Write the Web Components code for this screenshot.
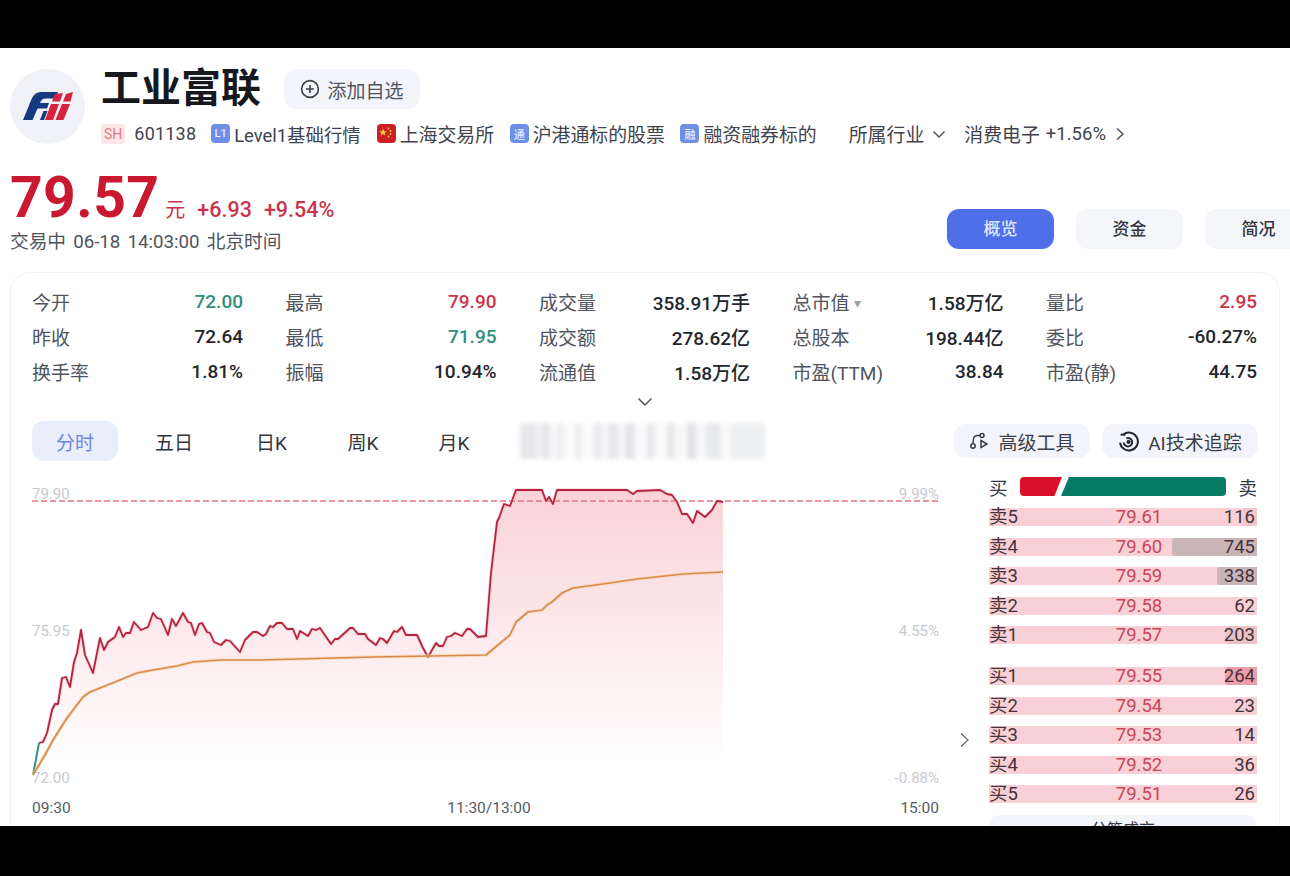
<!DOCTYPE html>
<html lang="zh-CN">
<head>
<meta charset="UTF-8">
<title>工业富联</title>
<style>
  html, body { margin: 0; background: #000; }
  body { font-family: Roboto, "Noto Sans CJK SC", sans-serif; overflow: hidden; height: 876px; }
  main-page { display: block; }
</style>
</head>
<body>
<main-page>
  <stock-title></stock-title>
  <stock-quote></stock-quote>
  <stats-card>
    <chart-tabs></chart-tabs>
    <div style="display:flex; align-items:flex-start">
      <time-chart></time-chart>
      <order-book></order-book>
    </div>
  </stats-card>
</main-page>

<script>
const FONT = 'Roboto, "Noto Sans CJK SC", sans-serif';

class MainPage extends HTMLElement {
  connectedCallback() {
    this.attachShadow({mode: 'open'}).innerHTML = `
    <style>
      :host { display: block; width: 1290px; height: 876px; background: #000; padding-top: 48px; box-sizing: border-box; }
      .sheet { height: 778px; background: #fff; overflow: hidden; padding: 21px 0 0 10px; box-sizing: border-box; font-family: ${FONT}; }
    </style>
    <div class="sheet"><slot></slot></div>`;
  }
}

class StockTag extends HTMLElement {
  connectedCallback() {
    const text = this.getAttribute('icon') || '';
    const flag = this.hasAttribute('flag');
    const inner = flag
      ? `<svg width="19" height="19" viewBox="0 0 19 19" fill="#f2cf3c"><path d="M6 4.500l1 2.700 2.800.1-2.200 1.700.8 2.700L6 10.100l-2.400 1.600.8-2.700-2.200-1.700 2.800-.1z"/><circle cx="11.500" cy="4.500" r=".9"/><circle cx="13.500" cy="7" r=".9"/><circle cx="13.500" cy="10" r=".9"/><circle cx="11.500" cy="12.500" r=".9"/></svg>`
      : text;
    const bg = flag ? '#cd1f28' : '#6f8fe6';
    this.attachShadow({mode: 'open'}).innerHTML = `
    <style>
      :host { display: inline-flex; align-items: center; gap: 4px; font-size: 18.900px; color: #3f434d; white-space: nowrap; }
      .ic { width: 19px; height: 19px; border-radius: 4px; background: ${bg}; color: #e6ecff; font-size: 11px; font-weight: 500; display: flex; align-items: center; justify-content: center; flex: none; }
    </style>
    <span class="ic">${inner}</span><slot></slot>`;
  }
}

class StockTitle extends HTMLElement {
  connectedCallback() {
    this.attachShadow({mode: 'open'}).innerHTML = `
    <style>
      :host { display: flex; gap: 16px; height: 75px; }
      .logo { width: 75px; height: 75px; border-radius: 50%; background: #eff1f6; flex: none; }
      .top { display: flex; align-items: center; height: 40px; gap: 23px; margin-bottom: 11px; }
      h1 { margin: 0; font-size: 40px; line-height: 40px; font-weight: 700; color: #16181d; letter-spacing: 0; }
      .add { height: 40px; width: 136px; box-sizing: border-box; background: #f4f5fa; border-radius: 12px; display: flex; align-items: center; justify-content: center; gap: 7px; font-size: 19px; color: #50545e; }
      .tags { display: flex; align-items: center; height: 27px; font-size: 18.900px; color: #3f434d; white-space: nowrap; }
      .sh { background: #fde6e6; color: #e57b80; font-size: 14px; height: 20px; line-height: 20px; padding: 0 3px; border-radius: 3px; margin-right: 9px; }
      .code { margin-right: 15px; font-size: 18px; letter-spacing: .2px; }
      stock-tag { margin-right: 15.500px; }
      .ind { display: inline-flex; align-items: center; }
      svg { flex: none; }
    </style>
    <div class="logo">
      <svg width="75" height="75" viewBox="0 0 75 75">
        <path fill="#16397f" d="M13 51 L22 29 Q25 23 31 23 L48 23 L45.500 29.500 L35 29.500 Q32 29.500 31 32 L30 34 L39 34 L37 39.500 L27.500 39.500 L22.500 51Z"/>
        <path fill="#16397f" d="M30 51 L33.500 42 L37.500 42 L34 51Z"/>
        <path fill="#d8213c" d="M35 51 L41 35 L49 35 L43 51Z"/>
        <path fill="#d8213c" d="M42 32.500 L45 25 L53 24 L50 32.500Z"/>
        <path fill="#d8213c" d="M45.500 51 L52 35 L60 35 L53.500 51Z"/>
        <path fill="#d8213c" d="M53 32.500 L56 25 L63 23 L60.500 32.500Z"/>
      </svg>
    </div>
    <div>
      <div class="top">
        <h1>工业富联</h1>
        <div class="add">
          <svg width="20" height="20" viewBox="0 0 20 20" fill="none" stroke="#3a3e48" stroke-width="1.6"><circle cx="10" cy="10" r="8.400"/><path d="M10 6v8M6 10h8"/></svg>
          <span>添加自选</span>
        </div>
      </div>
      <div class="tags">
        <span class="sh">SH</span><span class="code">601138</span>
        <stock-tag icon="L1" style="font-size:18.400px;margin-right:16px">Level1基础行情</stock-tag>
        <stock-tag flag>上海交易所</stock-tag>
        <stock-tag icon="通">沪港通标的股票</stock-tag>
        <stock-tag icon="融" style="margin-right:32px">融资融券标的</stock-tag>
        <span class="ind" style="margin-right:18px">所属行业
          <svg style="margin-left:8px" width="14" height="14" viewBox="0 0 14 14" fill="none" stroke="#4a4e58" stroke-width="1.400"><path d="M1.500 4.500 7 10l5.500-5.500"/></svg></span>
        <span class="ind">消费电子<span style="margin-left:6px;font-size:18.500px">+1.56%</span>
          <svg style="margin-left:7px" width="14" height="14" viewBox="0 0 14 14" fill="none" stroke="#4a4e58" stroke-width="1.400"><path d="M4 1.500 10 7l-6 5.500"/></svg></span>
      </div>
    </div>`;
  }
}

class StockQuote extends HTMLElement {
  connectedCallback() {
    this.attachShadow({mode: 'open'}).innerHTML = `
    <style>
      :host { display: flex; height: 128px; align-items: flex-start; }
      .left { flex: 0 0 937px; padding-top: 24px; box-sizing: border-box; }
      .price { display: flex; align-items: baseline; height: 60px; color: #c9182f; white-space: nowrap; }
      .big { font-size: 57px; line-height: 60px; font-weight: 700; letter-spacing: .4px; }
      .unit { font-size: 20px; margin-left: 6px; color: #c8354a; }
      .chg { font-size: 21.500px; margin-left: 12px; color: #c8354a; font-weight: 500; }
      .time { margin-top: -2px; font-size: 18.700px; color: #50545e; white-space: nowrap; word-spacing: 2.500px; }
      .btns { display: flex; gap: 22px; margin-top: 65px; flex: none; }
      .btn { width: 107px; height: 40px; padding-bottom: 3px; box-sizing: border-box; border-radius: 12px; background: #f5f6fa; display: flex; align-items: center; justify-content: center; font-size: 17px; font-weight: 500; color: #33363f; flex: none; }
      .on { background: #4f6fe8; color: #dfe6ff; }
    </style>
    <div class="left">
      <div class="price"><span class="big">79.57</span><span class="unit">元</span><span class="chg">+6.93</span><span class="chg">+9.54%</span></div>
      <div class="time">交易中 06-18 14:03:00 北京时间</div>
    </div>
    <div class="btns"><div class="btn on">概览</div><div class="btn">资金</div><div class="btn">简况</div></div>`;
  }
}

const STATS = [
  ['今开','72.00','#2f8f7a'],['最高','79.90','#c8354a'],['成交量','358.91万手'],['总市值 <i>▾</i>','1.58万亿'],['量比','2.95','#c8354a'],
  ['昨收','72.64'],['最低','71.95','#2f8f7a'],['成交额','278.62亿'],['总股本','198.44亿'],['委比','-60.27%'],
  ['换手率','1.81%'],['振幅','10.94%'],['流通值','1.58万亿'],['市盈(TTM)','38.84'],['市盈(静)','44.75']
];

class StatsCard extends HTMLElement {
  connectedCallback() {
    const cells = STATS.map(([k, v, c]) =>
      `<div class="cell"><span class="k">${k}</span><span class="v" style="color:${c || '#23262d'}">${v}</span></div>`).join('');
    this.attachShadow({mode: 'open'}).innerHTML = `
    <style>
      :host { display: block; width: 1270px; height: 600px; box-sizing: border-box; border: 1px solid #eff0f4; border-radius: 20px; padding: 11px 21px 0; }
      .grid { display: grid; grid-template-columns: repeat(5, 211px); column-gap: 42.500px; grid-auto-rows: 35px; }
      .cell { display: flex; justify-content: space-between; align-items: center; font-size: 19px; white-space: nowrap; }
      .k { color: #50545e; }
      .k i { font-style: normal; font-size: 14px; color: #9a9ea8; vertical-align: 2px; }
      .v { font-weight: 500; }
      .more { height: 32px; display: flex; justify-content: center; align-items: flex-start; padding-top: 8px; box-sizing: border-box; }
    </style>
    <div class="grid">${cells}</div>
    <div class="more"><svg width="16" height="10" viewBox="0 0 16 10" fill="none" stroke="#4a4e58" stroke-width="1.400"><path d="M1.500 1.500 8 8l6.500-6.500"/></svg></div>
    <slot></slot>`;
  }
}

class ChartTabs extends HTMLElement {
  connectedCallback() {
    this.attachShadow({mode: 'open'}).innerHTML = `
    <style>
      :host { display: flex; align-items: center; height: 40px; font-size: 19px; color: #33363f; white-space: nowrap; margin-bottom: 19px; }
      .t { text-align: center; flex: none; }
      .on { width: 86px; height: 40px; line-height: 45px; background: #e9eefb; color: #6f86dd; border-radius: 12px; }
      .blur { width: 245px; height: 36px; margin-left: 50px; flex: none; filter: blur(2px);
        background: linear-gradient(90deg, #e6e7ea 0 7%, #f4f4f6 7% 9%, #e4e5e8 9% 12%, #f7f7f8 12% 15%, #eeeff1 15% 18%, #fbfbfc 18% 23%, #eaebee 23% 25%, #fbfbfc 25% 30%, #e8e9ec 30% 33%, #f6f6f8 33% 36%, #e6e7ea 36% 40%, #f7f7f8 40% 43%, #e4e5e9 43% 47%, #f9f9fa 47% 52%, #e8e9ec 52% 55%, #fafafb 55% 60%, #e6e7ea 60% 63%, #f8f8f9 63% 68%, #e3e4e8 68% 72%, #f7f7f9 72% 76%, #e9eaed 76% 82%, #f9f9fa 82% 86%, #eeeff1 86% 100%); }
      .tool { height: 34px; border-radius: 12px; background: #f4f5fa; display: flex; align-items: center; justify-content: center; gap: 9px; font-size: 19px; color: #3a3e48; flex: none; }
      svg { flex: none; }
    </style>
    <div class="t on">分时</div>
    <div class="t" style="width:38px;margin-left:37px">五日</div>
    <div class="t" style="width:30px;margin-left:63px">日K</div>
    <div class="t" style="width:32px;margin-left:61px">周K</div>
    <div class="t" style="width:32px;margin-left:59px">月K</div>
    <div class="blur"></div>
    <div class="tool" style="width:136px;margin-left:189px">
      <svg width="20" height="20" viewBox="0 0 20 20" fill="none" stroke="#3a3e48" stroke-width="1.500"><circle cx="13" cy="4.500" r="2"/><circle cx="4" cy="15" r="2.200"/><path d="M11 4.500H8.500Q5 4.500 4.500 8T4 12.800M12 9.500l6 3.500-6 3.500z"/></svg>
      <span>高级工具</span>
    </div>
    <div class="tool" style="width:156px;margin-left:12px">
      <svg width="21" height="21" viewBox="0 0 20 20" fill="none" stroke="#23262d" stroke-width="1.900"><path d="M5 3.500A8.500 8.500 0 1 1 2 11"/><path d="M2.500 3.500H7"/><path d="M8 7a4 4 0 1 1-2.500 4"/><circle cx="10" cy="10.500" r="1" fill="#23262d"/></svg>
      <span>AI技术追踪</span>
    </div>`;
  }
}

// price line, read off the reference in page coordinates
const RED = '39,743 43,742 47,733 52,710 55,704 58,704 62,678 66,677 70,687 74,662 77,653 81,630 85,655 93,673 100,638 104,650 108,642 115,637 119,627 123,637 126,633 130,633 134,622 141,630 148,627 153,613 157,618 161,619 168,635 172,619 176,626 183,613 188,622 191,623 195,635 199,624 202,623 207,632 210,633 214,642 221,645 226,640 230,641 240,652 245,640 253,632 257,632 263,636 266,634 270,626 273,627 277,623 282,623 287,629 293,629 297,639 300,631 308,636 312,629 316,630 320,628 331,644 335,639 338,639 350,628 353,628 358,634 365,634 368,639 376,645 380,638 383,639 387,643 394,631 397,632 402,627 406,635 417,635 423,648 428,657 436,643 439,646 443,646 447,637 451,636 455,633 462,636 467,629 470,629 478,637 486,636 491,573 497,522 499,518 504,504 510,506 516,490 542,490 546,501 549,497 553,504 557,490 627,490 633,494 637,491 660,490 667,494 672,495 677,502 682,514 687,514 693,523 697,511 705,517 712,510 717,501 723,502';
const AVG = '33,775 45,755 53,740 67,718 83,697 90,692 120,680 137,673 153,670 177,666 193,662 220,660 260,660 373,657 486,655 510,635 516,622 528,612 542,610 547,605 552,602 562,593 573,588 603,584 637,579 683,574 723,572';

class TimeChart extends HTMLElement {
  connectedCallback() {
    const axis = 'font-size="15" fill="#c8cad0"';
    const time = 'font-size="15.500" fill="#565a65"';
    this.attachShadow({mode: 'open'}).innerHTML = `
    <style>
      :host { display: block; width: 957px; height: 345px; flex: none; position: relative; }
      svg { display: block; font-family: ${FONT}; }
      .next { position: absolute; left: 927px; top: 252px; }
    </style>
    <svg width="908" height="345" viewBox="32 480 908 345">
      <defs>
        <linearGradient id="fade" x1="0" y1="490" x2="0" y2="765" gradientUnits="userSpaceOnUse">
          <stop offset="0" stop-color="#e8455a" stop-opacity=".24"/>
          <stop offset="1" stop-color="#e8455a" stop-opacity="0"/>
        </linearGradient>
      </defs>
      <polygon fill="url(#fade)" points="33,785 33,775 ${RED} 723,785"/>
      <text x="32" y="499" ${axis}>79.90</text>
      <text x="32" y="636" ${axis}>75.95</text>
      <text x="32" y="783" ${axis}>72.00</text>
      <text x="939" y="499" text-anchor="end" ${axis}>9.99%</text>
      <text x="939" y="636" text-anchor="end" ${axis}>4.55%</text>
      <text x="939" y="783" text-anchor="end" ${axis}>-0.88%</text>
      <line x1="32" y1="501" x2="940" y2="501" stroke="#e8707f" stroke-width="2" stroke-opacity=".75" stroke-dasharray="6 3"/>
      <polyline fill="none" stroke="#2f8f7a" stroke-width="2" points="33,775 39,743"/>
      <polyline fill="none" stroke="#f3b8c0" stroke-width="3.500" stroke-linejoin="round" opacity=".5" points="${RED}"/>
      <polyline fill="none" stroke="#b5243f" stroke-width="1.800" stroke-linejoin="round" points="${RED}"/>
      <polyline fill="none" stroke="#f5d2ae" stroke-width="3.500" stroke-linejoin="round" opacity=".6" points="${AVG}"/>
      <polyline fill="none" stroke="#d98a4a" stroke-width="1.700" stroke-linejoin="round" points="${AVG}"/>
      <text x="32" y="813" ${time}>09:30</text>
      <text x="489" y="813" text-anchor="middle" ${time}>11:30/13:00</text>
      <text x="939" y="813" text-anchor="end" ${time}>15:00</text>
    </svg>
    <svg class="next" width="12" height="16" viewBox="0 0 12 16" fill="none" stroke="#6a6e78" stroke-width="1.300"><path d="M2 1.500 9 8l-7 6.500"/></svg>`;
  }
}

// [label, price, volume, bar width, bar colour]
const ASKS = [['卖5','79.61','116',14,'#f3c6cc'],['卖4','79.60','745',85,'#c9b5b8'],['卖3','79.59','338',40,'#c9b5b8'],['卖2','79.58','62',0],['卖1','79.57','203',32,'#e9c3c8']];
const BIDS = [['买1','79.55','264',32,'#ec9faa'],['买2','79.54','23',0],['买3','79.53','14',0],['买4','79.52','36',0],['买5','79.51','26',0]];

class OrderBook extends HTMLElement {
  connectedCallback() {
    const row = ([a, p, v, w, c]) => `<div class="row">
        ${w ? `<b style="width:${w}px;background:${c}"></b>` : ''}
        <span>${a}</span><span class="p">${p}</span><span class="v">${v}</span></div>`;
    this.attachShadow({mode: 'open'}).innerHTML = `
    <style>
      :host { display: block; width: 268px; flex: none; margin-top: -3px; font-size: 18.500px; color: #46323a; position: relative; }
      .head { display: flex; align-items: center; height: 19px; margin-bottom: 12px; white-space: nowrap; color: #33363f; justify-content: space-between; }
      .bar { width: 206px; display: flex; height: 19px; }
      .r { width: 42px; background: #d8102a; clip-path: polygon(0 0, 100% 0, 82% 100%, 0 100%); border-radius: 4px 0 0 4px; }
      .g { flex: 1; margin-left: -1px; background: #067c66; clip-path: polygon(8px 0, 100% 0, 100% 100%, 0 100%); border-radius: 0 4px 4px 0; }
      .row { position: relative; height: 18px; line-height: 18px; background: #f8d0d5; display: grid; grid-template-columns: 1fr 1fr 1fr; margin-bottom: 11.600px; white-space: nowrap; }
      .row span { position: relative; }
      .row b { position: absolute; right: 0; top: 0; bottom: 0; border-radius: 3px 0 0 3px; }
      .row .p { color: #c8455a; text-align: center; position: relative; left: 16px; }
      .v { text-align: right; padding-right: 2px; }
      .gap { height: 11px; }
      .tick { height: 34px; line-height: 30px; background: #f3f5fa; border-radius: 10px; text-align: center; font-size: 16px; color: #33363f; }
    </style>
    <div class="head"><span>买</span><div class="bar"><div class="r"></div><div class="g"></div></div><span>卖</span></div>
    ${ASKS.map(row).join('')}
    <div class="gap"></div>
    ${BIDS.map(row).join('')}
    <div class="tick">分笔成交</div>`;
  }
}

customElements.define('main-page', MainPage);
customElements.define('stock-tag', StockTag);
customElements.define('stock-title', StockTitle);
customElements.define('stock-quote', StockQuote);
customElements.define('stats-card', StatsCard);
customElements.define('chart-tabs', ChartTabs);
customElements.define('time-chart', TimeChart);
customElements.define('order-book', OrderBook);
</script>
</body>
</html>
